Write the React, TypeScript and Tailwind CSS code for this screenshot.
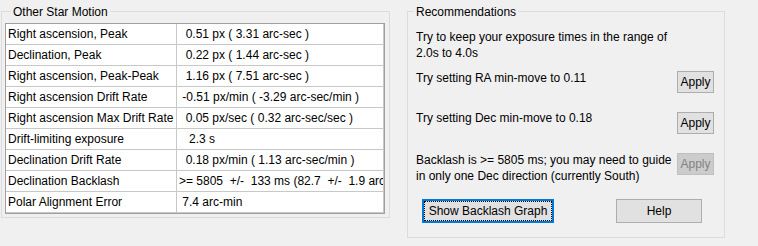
import clsx from "clsx";

interface MotionRow {
  label: string;
  value: string;
}

const motionRows: MotionRow[] = [
  { label: "Right ascension, Peak", value: "  0.51 px ( 3.31 arc-sec )" },
  { label: "Declination, Peak", value: "  0.22 px ( 1.44 arc-sec )" },
  { label: "Right ascension, Peak-Peak", value: "  1.16 px ( 7.51 arc-sec )" },
  { label: "Right ascension Drift Rate", value: " -0.51 px/min ( -3.29 arc-sec/min )" },
  { label: "Right ascension Max Drift Rate", value: "  0.05 px/sec ( 0.32 arc-sec/sec )" },
  { label: "Drift-limiting exposure", value: "   2.3 s" },
  { label: "Declination Drift Rate", value: "  0.18 px/min ( 1.13 arc-sec/min )" },
  {
    label: "Declination Backlash",
    value: ">= 5805  +/-  133 ms (82.7  +/-  1.9 arc-sec)",
  },
  { label: "Polar Alignment Error", value: " 7.4 arc-min" },
];

function GroupLabel({ children }: { children: string }) {
  return (
    <span className="-mt-2 ml-[6px] w-fit bg-[#f0f0f0] px-[2px] leading-[16px]">
      {children}
    </span>
  );
}

function ApplyButton({ disabled }: { disabled?: boolean }) {
  return (
    <button
      type="button"
      disabled={disabled}
      className={clsx(
        "h-[22px] w-[37px] shrink-0 border leading-[20px]",
        disabled
          ? "border-[#bfbfbf] bg-[#cccccc] text-[#838383]"
          : "border-[#adadad] bg-[#e1e1e1] text-black"
      )}
    >
      Apply
    </button>
  );
}

export default function App() {
  return (
    <div className="flex h-[246px] w-[758px] items-start bg-[#f0f0f0] pt-[11px] font-['Liberation_Sans',Arial,sans-serif] text-[12px] leading-[16px] text-black">
      {/* Other Star Motion */}
      <div className="ml-[1px] flex h-[207px] w-[389px] flex-col border border-[#dcdcdc] pl-[3px] pr-[4px]">
        <GroupLabel>Other Star Motion</GroupLabel>
        <div className="mt-[3px] border border-[#a0a0a0] bg-white">
          {motionRows.map((row) => (
            <div
              key={row.label}
              className="flex h-[21px] border-b border-[#c8c8c8] leading-[20px]"
            >
              <div className="w-[171px] shrink-0 border-r border-[#c8c8c8] pl-[2px] whitespace-nowrap">
                {row.label}
              </div>
              <div className="min-w-0 flex-1 overflow-hidden border-r border-[#c8c8c8] pl-[2px] whitespace-pre">
                {row.value}
              </div>
            </div>
          ))}
        </div>
      </div>

      {/* Recommendations */}
      <div className="ml-[17px] flex h-[227px] w-[318px] flex-col border border-[#dcdcdc]">
        <GroupLabel>Recommendations</GroupLabel>

        <div className="mt-[9px] pl-[8px]">
          <div>Try to keep your exposure times in the range of</div>
          <div>2.0s to 4.0s</div>
        </div>

        <div className="mt-[9px] flex items-start justify-between pl-[8px] pr-[10px]">
          <span>Try setting RA min-move to 0.11</span>
          <div className="mt-[1px]">
            <ApplyButton />
          </div>
        </div>

        <div className="mt-[17px] flex items-start justify-between pl-[8px] pr-[10px]">
          <span>Try setting Dec min-move to 0.18</span>
          <div className="mt-[2px]">
            <ApplyButton />
          </div>
        </div>

        <div className="mt-[18px] flex items-start justify-between pl-[8px] pr-[10px]">
          <div>
            <div>Backlash is &gt;= 5805 ms; you may need to guide</div>
            <div>in only one Dec direction (currently South)</div>
          </div>
          <div className="mt-[1px]">
            <ApplyButton disabled />
          </div>
        </div>

        {/* Bottom buttons */}
        <div className="mt-[15px] flex pl-[14px]">
          <button
            type="button"
            className="h-[24px] w-[132px] border-2 border-[#0078d7] bg-[#e1e1e1]"
          >
            <div className="flex h-full w-full items-center justify-center border border-dotted border-black">
              Show Backlash Graph
            </div>
          </button>
          <button
            type="button"
            className="ml-[62px] h-[24px] w-[86px] border border-[#adadad] bg-[#e1e1e1]"
          >
            Help
          </button>
        </div>
      </div>
    </div>
  );
}
